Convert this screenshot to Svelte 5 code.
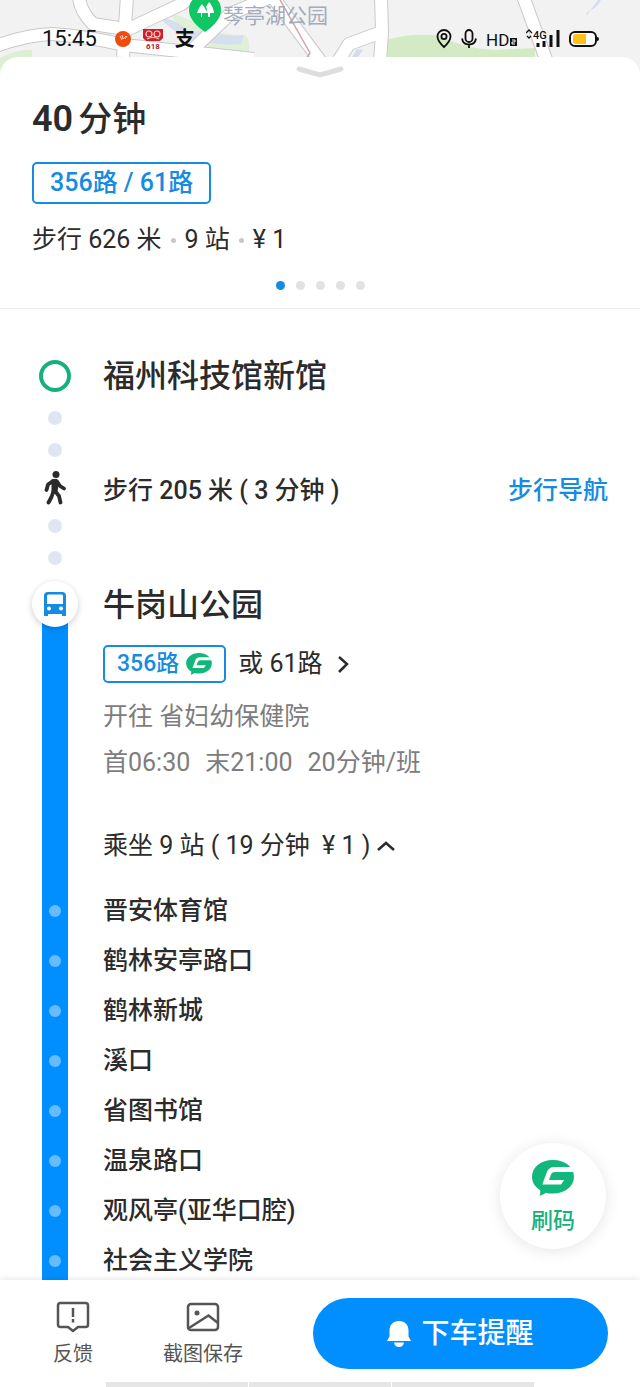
<script lang="ts">
   const pageCount = 5;
   const stops: string[] = [
      "晋安体育馆",
      "鹤林安亭路口",
      "鹤林新城",
      "溪口",
      "省图书馆",
      "温泉路口",
      "观风亭(亚华口腔)",
      "社会主义学院",
   ];

   let activePage = $state(0);
   let isOpen = $state(true);
</script>

{#snippet busCode()}
   <svg class="bus-code" viewBox="0 0 42 36" aria-hidden="true">
      <path
         fill="#12b87b"
         d="M21 0C33 0 42 7 42 16.800S33 33.600 21 33.600c-2.500 0-4.800-.3-7-.9-1.800 1.300-4 2.400-6.500 3.100.7-1.700 1-3.700.7-5.600C3 27.200 0 22.500 0 16.800 0 7 9 0 21 0z"
      />
      <path fill="#fff" d="M42 7H22.500q-6 0-7.800 5.500L10.300 24.600H29l3.200-4.600H17l1.700-4.800Q19.800 12 23 12H42z" />
   </svg>
{/snippet}

<div class="app">
   <header class="map">
      <svg class="map-canvas" viewBox="0 0 640 80" preserveAspectRatio="xMidYMid slice" aria-hidden="true">
         <rect width="640" height="80" fill="#f2f2f2" />
         <path d="M0 58q16-9 32-8v30H0z" fill="#dcefd3" />
         <path d="M168 12l22 8 20 12 36 4q6 8 2 18l-50-6z" fill="#e0f0d8" />
         <path d="M160 18q16 0 28 14l22-1q12 6 34 4l-3 9q-20 2-40-3-24-4-41-23z" fill="#d5dfee" />
         <path d="M386 40q28-8 55-4 20 12 54 14l40-2v32H390z" fill="#d2ebc4" />
         <path d="M586 16l12-16h3q-4 8-14 12zM352 57l5-8 6 1-5 7z" fill="#d5dcf2" />
         <g fill="none" stroke-linejoin="round">
            <g stroke="#c9c9cb" stroke-width="14">
               <path d="M-4 46q30-11 56-12 40 3 72 11l130 14" />
               <path d="M79-5q0 15 14 29l32 5" />
               <path d="M127-4l-4 61" />
               <path d="M120 33l62-29 12-10" />
               <path d="M190 52l40-38 38-16" />
               <path d="M272-4l49 66" />
               <path d="M381-4l1 36-33 12-10 16" />
               <path d="M382 32l-2 30" />
               <path d="M523-4l24 66" />
            </g>
            <g stroke="#fff" stroke-width="12">
               <path d="M-4 46q30-11 56-12 40 3 72 11l130 14" />
               <path d="M79-5q0 15 14 29l32 5" />
               <path d="M127-4l-4 61" />
               <path d="M120 33l62-29 12-10" />
               <path d="M190 52l40-38 38-16" />
               <path d="M272-4l49 66" />
               <path d="M381-4l1 36-33 12-10 16" />
               <path d="M382 32l-2 30" />
               <path d="M523-4l24 66" />
            </g>
            <path d="M279-2l31 55-4 6" stroke="#d3a4aa" stroke-width="1.500" />
         </g>
         <path d="M205 32q-16-11-16-22 0-14 16-14t16 14q0 11-16 22z" fill="#11c765" />
         <path d="M202 4q3 3 5 9h-5v4h-1v-4h-4q2-6 5-9zM209 2q4 4 5 11h-4v4h-2v-4h-2l1-4-1-2z" fill="#fff" />
      </svg>
      <span class="place">琴亭湖公园</span>

      <div class="status">
         <time>15:45</time>
         <div class="apps">
            <svg width="16" height="16" viewBox="0 0 16 16" aria-hidden="true">
               <circle cx="8" cy="8" r="8" fill="#ee4a12" />
               <path d="M5 5l2 4M7 4l1 4 3-3M10 8l2-3" stroke="#ffe1b5" fill="none" />
            </svg>
            <svg width="22" height="24" viewBox="0 0 22 24" aria-hidden="true">
               <path d="M1 2h20v9l-3 3H4l-3-3z" fill="#cf1f2e" />
               <g fill="none" stroke="#f8d6c4" stroke-width="1.200">
                  <circle cx="7" cy="7" r="3" />
                  <circle cx="15" cy="7" r="3" />
                  <path d="M5 12q6-3 12 0" />
               </g>
               <text x="11" y="22" text-anchor="middle" font-size="8" font-weight="700" fill="#b3202c">618</text>
            </svg>
            <span class="pay">支</span>
         </div>
         <svg width="16" height="20" viewBox="0 0 16 20" fill="none" stroke="#111" stroke-width="1.800" aria-hidden="true">
            <path d="M8 18Q1.500 12 1.500 7.500a6.500 6.500 0 0 1 13 0Q14.500 12 8 18z" />
            <circle cx="8" cy="7.500" r="2.600" />
         </svg>
         <svg width="16" height="20" viewBox="0 0 16 20" fill="none" stroke="#111" stroke-width="1.800" aria-hidden="true">
            <rect x="4.500" y="1" width="7" height="12" rx="3.500" />
            <path d="M1 9.500q1 6 7 6t7-6M8 15.500V19" />
         </svg>
         <svg class="hd" width="31" height="24" viewBox="0 0 31 24" aria-hidden="true">
            <text x="0" y="19" font-size="17" fill="#111">HD</text>
            <rect x="24" y="11" width="7" height="8" fill="#111" />
            <path d="M26 13h3v2h-3v2h3" fill="none" stroke="#fff" />
         </svg>
         <svg width="34" height="20" viewBox="0 0 34 20" aria-hidden="true">
            <path d="M0 4l3-3 3 3M1 7l2 2 2-2" fill="none" stroke="#111" stroke-width="1.300" />
            <text x="7" y="10" font-size="11" font-weight="500" fill="#111">4G</text>
            <path d="M12 14v4M18 12v6M25 6v12M32 1v17" stroke="#111" stroke-width="3" />
         </svg>
         <svg width="30" height="18" viewBox="0 0 30 18" aria-hidden="true">
            <rect x="1" y="2" width="26" height="14" rx="5" fill="#fff" stroke="#111" stroke-width="2" />
            <path d="M7 4h10v10H7q-3 0-3-3V7q0-3 3-3z" fill="#fbc117" />
            <path d="M28 7q2 0 2 2t-2 2z" fill="#111" />
         </svg>
      </div>
   </header>

   <section class="sheet">
      <svg class="handle" width="48" height="12" viewBox="0 0 48 12" aria-hidden="true">
         <path d="M3 3l21 6 21-6" fill="none" stroke="#dedede" stroke-width="5" stroke-linecap="round" />
      </svg>
      <h1><b>40</b>分钟</h1>
      <span class="tag lines">356路 / 61路</span>
      <p class="meta">步行 626 米<i></i>9 站<i></i>¥ 1</p>
      <nav class="pager">
         {#each { length: pageCount } as _, index}
            <button
               type="button"
               class:active={index === activePage}
               aria-label={`方案${index + 1}`}
               onclick={() => (activePage = index)}
            ></button>
         {/each}
      </nav>
   </section>

   <div class="body">
      <main>
         <div class="row origin">
            <div class="rail"><span class="ring"></span></div>
            <h2>福州科技馆新馆</h2>
         </div>

         <div class="row walk">
            <div class="rail walk-rail">
               <span class="dot"></span>
               <span class="dot"></span>
               <svg class="walker" width="22" height="34" viewBox="0 0 22 34" aria-hidden="true">
                  <circle cx="12" cy="3.600" r="3.500" fill="#2b2b2b" />
                  <path d="M7.500 8.500l5-.8 2.500 3-1.500 10-6 .5z" fill="#2b2b2b" />
                  <path
                     d="M9 10l-5 3.500-1.500 5.500M13 10.500l3 4.500 4 2.500M9.500 20l-2 6L4.500 31.500M11 20l4 5 1.500 6.500"
                     fill="none"
                     stroke="#2b2b2b"
                     stroke-width="3.800"
                     stroke-linecap="round"
                     stroke-linejoin="round"
                  />
               </svg>
               <span class="dot"></span>
               <span class="dot"></span>
            </div>
            <p class="strong">步行 205 米 ( 3 分钟 )</p>
            <a href="#walk">步行导航</a>
         </div>

         <div class="row ride">
            <div class="rail bus-rail">
               <span class="badge">
                  <svg width="22" height="24" viewBox="0 0 22 24" aria-hidden="true">
                     <path
                        fill="#168be2"
                        fill-rule="evenodd"
                        d="M4 0h14q4 0 4 4v20h-4v-2H4v2H0V4q0-4 4-4zM4.500 2.500q-1.500 0-1.500 1.500v8h16V4q0-1.500-1.500-1.500zM5 14.500a2 2 0 1 0 .01 0zM17 14.500a2 2 0 1 0 .01 0z"
                     />
                  </svg>
               </span>
               <span class="bar"></span>
            </div>
            <div class="ride-info">
               <h2>牛岗山公园</h2>
               <div class="choices">
                  <span class="tag">356路 {@render busCode()}</span>
                  <button type="button" class="plain">
                     或 61路
                     <svg width="12" height="20" viewBox="0 0 12 20" aria-hidden="true">
                        <path d="M2 3l8 7-8 8" fill="none" stroke="#2b2b2b" stroke-width="2.500" />
                     </svg>
                  </button>
               </div>
               <div class="muted">
                  <p>开往 省妇幼保健院</p>
                  <p class="times"><span>首06:30</span><span>末21:00</span><span>20分钟/班</span></p>
               </div>
               <button type="button" class="plain toggle" aria-expanded={isOpen} onclick={() => (isOpen = !isOpen)}>
                  <span>乘坐 9 站 ( 19 分钟 &nbsp;¥ 1 )</span>
                  <svg class:closed={!isOpen} width="18" height="12" viewBox="0 0 18 12" aria-hidden="true">
                     <path d="M1 10l8-7 8 7" fill="none" stroke="#2b2b2b" stroke-width="2.500" />
                  </svg>
               </button>
            </div>
         </div>

         {#if isOpen}
            <ul>
               {#each stops as stop}
                  <li class="row">
                     <div class="rail"><span class="bar"><i></i></span></div>
                     <span class="strong">{stop}</span>
                  </li>
               {/each}
            </ul>
         {/if}
      </main>

      <button type="button" class="scan">
         {@render busCode()}
         刷码
      </button>
   </div>

   <footer>
      <div class="actions">
         <button type="button" class="tool">
            <svg width="34" height="34" viewBox="0 0 34 34" fill="none" stroke="#555" stroke-width="2.500" aria-hidden="true">
               <path stroke-linejoin="round" d="M4.500 3h25Q32 3 32 5.500v19q0 2.500-2.500 2.500H22l-5 4-5-4H4.500Q2 27 2 24.500v-19Q2 3 4.500 3z" />
               <path d="M17 8v9M17 19v3.500" />
            </svg>
            反馈
         </button>
         <button type="button" class="tool">
            <svg width="34" height="34" viewBox="0 0 34 34" fill="none" stroke="#555" stroke-width="2.500" aria-hidden="true">
               <rect x="2" y="4" width="30" height="26" rx="3" />
               <circle cx="11" cy="13" r="2.500" fill="#555" stroke="none" />
               <path d="M3 28l19.500-12.500L32 23" />
            </svg>
            截图保存
         </button>
         <button type="button" class="remind">
            <svg width="24" height="28" viewBox="0 0 24 28" fill="#fff" aria-hidden="true">
               <path d="M12 1c6 0 9.500 4 9.500 9.500v6L24 21H0l2.500-4.500v-6C2.500 5 6 1 12 1zM7 22.500h10q-1 4.500-5 4.500t-5-4.500z" />
            </svg>
            下车提醒
         </button>
      </div>
      <div class="home"><i></i><i></i><i></i></div>
   </footer>
</div>

<style>
   :global(body) {
      background: #fff;
   }

   .app {
      display: flex;
      flex-direction: column;
      height: 100vh;
      color: #2b2b2b;
      font: 400 25px/36px Roboto, "Noto Sans CJK SC", sans-serif;
   }

   h1,
   h2,
   p,
   ul {
      margin: 0;
      padding: 0;
   }

   svg {
      flex: none;
   }

   button {
      border: 0;
      padding: 0;
      background: none;
      color: inherit;
      font: inherit;
      cursor: pointer;
   }

   .map {
      position: relative;
      flex: none;
      height: 80px;
      overflow: hidden;
   }

   .map-canvas {
      position: absolute;
      inset: 0;
      width: 100%;
      height: 100%;
   }

   .place {
      position: absolute;
      left: 223px;
      top: 0;
      color: #a5abbd;
      font-size: 21px;
      line-height: 32px;
   }

   .status {
      position: relative;
      display: flex;
      align-items: center;
      gap: 9px;
      padding: 24px 41px 0 42px;
      color: #111;
      font-size: 22px;
      line-height: 30px;
   }

   .apps {
      display: flex;
      align-items: center;
      gap: 11px;
      margin: 0 auto 0 9px;
   }

   .pay {
      font-size: 20px;
      font-weight: 700;
   }

   .hd {
      overflow: visible;
   }

   .sheet {
      position: relative;
      display: flex;
      flex-direction: column;
      align-items: flex-start;
      flex: none;
      margin-top: -23px;
      padding: 9px 32px 18px;
      border-bottom: 1px solid #ebebeb;
      border-radius: 18px 18px 0 0;
      background: #fff;
   }

   .handle,
   .pager {
      align-self: center;
   }

   h1 {
      margin-top: 17px;
      font-size: 34px;
      font-weight: 500;
      line-height: 48px;
   }

   h1 b {
      margin-right: 5px;
      font-size: 36px;
      font-weight: 600;
   }

   h2 {
      font-size: 32px;
      font-weight: 500;
      line-height: 48px;
   }

   .tag {
      display: flex;
      align-items: center;
      gap: 7px;
      padding: 0 12px;
      border: 2px solid #168be2;
      border-radius: 5px;
      color: #168be2;
      font-size: 23px;
      font-weight: 500;
      line-height: 34px;
   }

   .lines {
      margin-top: 19px;
      padding: 0 16px;
      font-size: 25px;
      line-height: 38px;
   }

   .meta {
      display: flex;
      align-items: center;
      margin-top: 18px;
   }

   .meta i {
      width: 5px;
      height: 5px;
      margin: 0 9px;
      border-radius: 50%;
      background: #c8c8c8;
   }

   .pager {
      display: flex;
      gap: 11px;
      margin-top: 23px;
   }

   .pager button {
      width: 9px;
      height: 9px;
      border-radius: 50%;
      background: #e2e2e2;
   }

   .pager .active {
      background: #168be2;
   }

   .body {
      position: relative;
      flex: 1;
      min-height: 0;
   }

   main {
      height: 100%;
      overflow-y: auto;
      scrollbar-width: none;
   }

   .row {
      display: flex;
      align-items: center;
      gap: 25px;
      padding: 0 32px;
   }

   .rail {
      display: flex;
      justify-content: center;
      flex: none;
      width: 46px;
   }

   .origin {
      padding-top: 43px;
   }

   .ring {
      box-sizing: border-box;
      width: 32px;
      height: 32px;
      border: 4px solid #17b07b;
      border-radius: 50%;
   }

   .walk-rail {
      flex-direction: column;
      align-items: center;
      gap: 18px;
      padding: 11px 0 16px;
   }

   .dot {
      width: 14px;
      height: 14px;
      border-radius: 50%;
      background: #dfe6f1;
   }

   .walker {
      margin: -4px 0;
   }

   .strong {
      font-weight: 500;
   }

   .walk a {
      margin-left: auto;
      color: #168be2;
      font-weight: 500;
      text-decoration: none;
   }

   .ride {
      align-items: stretch;
   }

   .bus-rail {
      flex-direction: column;
      align-items: center;
   }

   .badge {
      z-index: 1;
      display: flex;
      align-items: center;
      justify-content: center;
      width: 46px;
      height: 46px;
      border-radius: 50%;
      background: #fff;
      box-shadow: 0 2px 6px rgba(0, 0, 0, 0.2);
   }

   .bar {
      display: flex;
      align-items: center;
      justify-content: center;
      width: 26px;
      height: 50px;
      background: #018fff;
   }

   .bus-rail .bar {
      flex: 1;
      margin-top: -8px;
   }

   .bar i {
      width: 12px;
      height: 12px;
      border-radius: 50%;
      background: #66bcff;
   }

   .ride-info {
      padding-bottom: 22px;
   }

   .choices {
      display: flex;
      align-items: center;
      gap: 12px;
      margin-top: 16px;
   }

   .choices .bus-code {
      width: 26px;
      height: 22px;
   }

   .plain {
      display: flex;
      align-items: center;
      gap: 14px;
   }

   .muted {
      display: flex;
      flex-direction: column;
      gap: 10px;
      margin-top: 16px;
      color: #7d7d7d;
   }

   .times {
      display: flex;
      gap: 15px;
   }

   .toggle {
      gap: 7px;
      margin-top: 47px;
   }

   .closed {
      transform: rotate(180deg);
   }

   ul {
      list-style: none;
   }

   .scan {
      position: absolute;
      right: 34px;
      bottom: 31px;
      display: flex;
      flex-direction: column;
      align-items: center;
      justify-content: center;
      gap: 10px;
      padding-top: 4px;
      width: 106px;
      height: 106px;
      border-radius: 50%;
      background: #fff;
      box-shadow: 0 2px 16px rgba(0, 0, 0, 0.1);
      color: #17b07b;
      font-size: 22px;
      font-weight: 500;
      line-height: 30px;
   }

   .scan .bus-code {
      width: 42px;
      height: 36px;
   }

   footer {
      position: relative;
      flex: none;
      background: #fff;
      box-shadow: 0 -1px 6px rgba(0, 0, 0, 0.1);
   }

   .actions {
      display: flex;
      align-items: center;
      gap: 70px;
      padding: 18px 32px 13px 53px;
   }

   .tool {
      display: flex;
      flex-direction: column;
      align-items: center;
      gap: 7px;
      color: #555;
      font-size: 20px;
      line-height: 26px;
   }

   .remind {
      display: flex;
      align-items: center;
      justify-content: center;
      flex: 1;
      gap: 10px;
      height: 71px;
      border-radius: 36px;
      background: #018fff;
      color: #fff;
      font-size: 28px;
      font-weight: 500;
   }

   .home {
      display: flex;
      justify-content: center;
      gap: 1px;
   }

   .home i {
      width: 142px;
      height: 5px;
      background: #e6e6e6;
   }
</style>
